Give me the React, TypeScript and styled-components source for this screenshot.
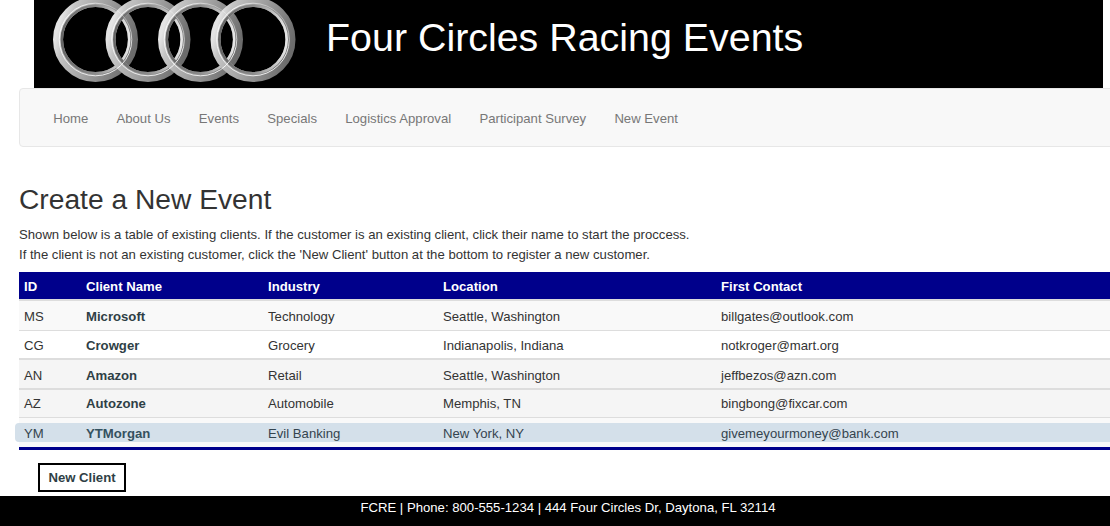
import styled, { createGlobalStyle } from "styled-components";

const GlobalStyle = createGlobalStyle`
	html, body {
		margin: 0;
		padding: 0;
		overflow: hidden;
		background: #fff;
		font-family: "Liberation Sans", Arial, sans-serif;
		font-size: 13.15px;
		line-height: 20px;
		color: #333;
	}
`;

const Page = styled.div`
	width: 1110px;
	height: 526px;
	display: flex;
	flex-direction: column;
	overflow: hidden;
`;
const Banner = styled.header`
	height: 88px;
	margin: 0 7px 0 34px;
	background: #000;
	display: flex;
	align-items: center;
	flex-shrink: 0;
`;
const Logo = styled.svg`
	width: 262px;
	height: 88px;
	margin-left: 15px;
	flex-shrink: 0;
`;
const Title = styled.h1`
	margin: 0 0 14px 15px;
	font-size: 39.4px;
	line-height: 44px;
	font-weight: 400;
	color: #fff;
`;
const Nav = styled.nav`
	box-sizing: border-box;
	height: 59px;
	margin: 0 -10px 0 19px;
	padding: 0 19px;
	display: flex;
	background: #f8f8f8;
	border: 1px solid #e7e7e7;
	border-radius: 4px;
	flex-shrink: 0;
`;
const NavLink = styled.a`
	padding: 0 14.15px;
	line-height: 59px;
	color: #777;
	text-decoration: none;
`;
const Main = styled.main`
	flex: 1;
	margin-left: 19px;
`;
const Heading = styled.h2`
	margin: 36px 0 9px;
	font-size: 28.2px;
	line-height: 33px;
	font-weight: 500;
	color: #333;
`;
const Intro = styled.p`
	margin: 0 0 7px;
`;
const Table = styled.table`
	width: 1100px;
	table-layout: fixed;
	border-collapse: separate;
	border-spacing: 0;
	border-bottom: 3px solid #00008b;
`;
const HeadCell = styled.th<{ $width: number }>`
	box-sizing: border-box;
	width: ${(p) => p.$width}px;
	height: 29px;
	padding: 3px 5px 0;
	background: #00008b;
	color: #fff;
	font-weight: 700;
	text-align: left;
	border-bottom: 2px solid #ddd;
`;
const Row = styled.tr<{ $bg: string }>`
	background: ${(p) => p.$bg};
`;
const Cell = styled.td<{ $strong?: boolean; $line?: number; $height?: number; $top?: number }>`
	box-sizing: border-box;
	height: ${(p) => p.$height ?? 29}px;
	padding: ${(p) => p.$top ?? 3}px 5px 0;
	border-bottom: ${(p) => p.$line ?? 0}px solid #ddd;
	font-weight: ${(p) => (p.$strong ? 700 : 400)};
	color: ${(p) => (p.$strong ? "#2f3f46" : "#333")};
	white-space: nowrap;
`;
const ActiveCell = styled(Cell)`
	position: relative;
	color: ${(p) => (p.$strong ? "#34515f" : "#34444f")};
	&::before {
		content: "";
		position: absolute;
		top: 5px;
		bottom: 5px;
		left: 0;
		right: 0;
		background: #d4e0ea;
	}
	&:first-child::before {
		left: -4px;
		border-radius: 4px 0 0 4px;
	}
`;
const CellText = styled.span`
	position: relative;
`;
const NewClient = styled.button`
	box-sizing: border-box;
	display: block;
	width: 88px;
	height: 29px;
	margin: 13px 0 0 19px;
	padding: 0;
	background: #fff;
	border: 2px solid #000;
	font: 700 13.15px "Liberation Sans", Arial, sans-serif;
	color: #2f3f46;
`;
const Footer = styled.footer`
	height: 30px;
	background: #000;
	color: #fff;
	text-align: center;
	line-height: 23px;
	padding-left: 26px;
	flex-shrink: 0;
`;

const navItems = ["Home", "About Us", "Events", "Specials", "Logistics Approval", "Participant Survey", "New Event"];
const columns: [string, number][] = [
	["ID", 62],
	["Client Name", 182],
	["Industry", 175],
	["Location", 278],
	["First Contact", 403],
];
const clients = [
	{ id: "MS", name: "Microsoft", industry: "Technology", location: "Seattle, Washington", contact: "billgates@outlook.com", bg: "#f9f9f9", line: 1, height: 30, top: 3 },
	{ id: "CG", name: "Crowger", industry: "Grocery", location: "Indianapolis, Indiana", contact: "notkroger@mart.org", bg: "#fff", line: 2, height: 29, top: 3 },
	{ id: "AN", name: "Amazon", industry: "Retail", location: "Seattle, Washington", contact: "jeffbezos@azn.com", bg: "#f5f5f5", line: 2, height: 30, top: 3 },
	{ id: "AZ", name: "Autozone", industry: "Automobile", location: "Memphis, TN", contact: "bingbong@fixcar.com", bg: "#f5f5f5", line: 1, height: 28, top: 1 },
];
const ringCenters = [46.5, 99, 151.5, 204];

function Rings() {
	return (
		<Logo viewBox="0 0 262 88" aria-label="Four Circles logo">
			<defs>
				<linearGradient id="ringBody" x1="0" y1="0.35" x2="1" y2="0.65">
					<stop offset="0" stopColor="#e4e4e4" />
					<stop offset="0.12" stopColor="#c4c4c4" />
					<stop offset="0.5" stopColor="#a0a0a0" />
					<stop offset="1" stopColor="#6c6c6c" />
				</linearGradient>
				<linearGradient id="ringEdge" x1="0" y1="0" x2="1" y2="0">
					<stop offset="0" stopColor="#666666" />
					<stop offset="0.5" stopColor="#8c8c8c" />
					<stop offset="1" stopColor="#e6e6e6" />
				</linearGradient>
				<linearGradient id="ringLine" x1="0.9" y1="0" x2="0.1" y2="1">
					<stop offset="0" stopColor="#ffffff" stopOpacity="0.1" />
					<stop offset="0.35" stopColor="#ffffff" stopOpacity="0.85" />
					<stop offset="0.7" stopColor="#ffffff" stopOpacity="0.85" />
					<stop offset="1" stopColor="#ffffff" stopOpacity="0.7" />
				</linearGradient>
			</defs>
			{ringCenters.map((cx) => (
				<g key={cx} fill="none">
					<circle cx={cx} cy={39.5} r={37.5} stroke="url(#ringBody)" strokeWidth={10} />
					<circle cx={cx} cy={39.5} r={33.7} stroke="url(#ringEdge)" strokeWidth={2.6} />
				</g>
			))}
			{ringCenters.map((cx) => (
				<circle key={cx} cx={cx} cy={39.5} r={36.3} fill="none" stroke="url(#ringLine)" strokeWidth={1} />
			))}
		</Logo>
	);
}

export default function App() {
	return (
		<Page>
			<GlobalStyle />
			<Banner>
				<Rings />
				<Title>Four Circles Racing Events</Title>
			</Banner>
			<Nav>
				{navItems.map((item) => (
					<NavLink key={item} href="#">
						{item}
					</NavLink>
				))}
			</Nav>
			<Main>
				<Heading>Create a New Event</Heading>
				<Intro>
					Shown below is a table of existing clients. If the customer is an existing client, click their name to start the proccess.
					<br />
					If the client is not an existing customer, click the 'New Client' button at the bottom to register a new customer.
				</Intro>
				<Table>
					<thead>
						<tr>
							{columns.map(([label, width]) => (
								<HeadCell key={label} $width={width}>
									{label}
								</HeadCell>
							))}
						</tr>
					</thead>
					<tbody>
						{clients.map((c) => (
							<Row key={c.id} $bg={c.bg}>
								<Cell $line={c.line} $height={c.height} $top={c.top}>{c.id}</Cell>
								<Cell $line={c.line} $height={c.height} $top={c.top} $strong>{c.name}</Cell>
								<Cell $line={c.line} $height={c.height} $top={c.top}>{c.industry}</Cell>
								<Cell $line={c.line} $height={c.height} $top={c.top}>{c.location}</Cell>
								<Cell $line={c.line} $height={c.height} $top={c.top}>{c.contact}</Cell>
							</Row>
						))}
						<Row $bg="#f9f9f9">
							<ActiveCell><CellText>YM</CellText></ActiveCell>
							<ActiveCell $strong><CellText>YTMorgan</CellText></ActiveCell>
							<ActiveCell><CellText>Evil Banking</CellText></ActiveCell>
							<ActiveCell><CellText>New York, NY</CellText></ActiveCell>
							<ActiveCell><CellText>givemeyourmoney@bank.com</CellText></ActiveCell>
						</Row>
					</tbody>
				</Table>
				<NewClient>New Client</NewClient>
			</Main>
			<Footer>FCRE | Phone: 800-555-1234 | 444 Four Circles Dr, Daytona, FL 32114</Footer>
		</Page>
	);
}
